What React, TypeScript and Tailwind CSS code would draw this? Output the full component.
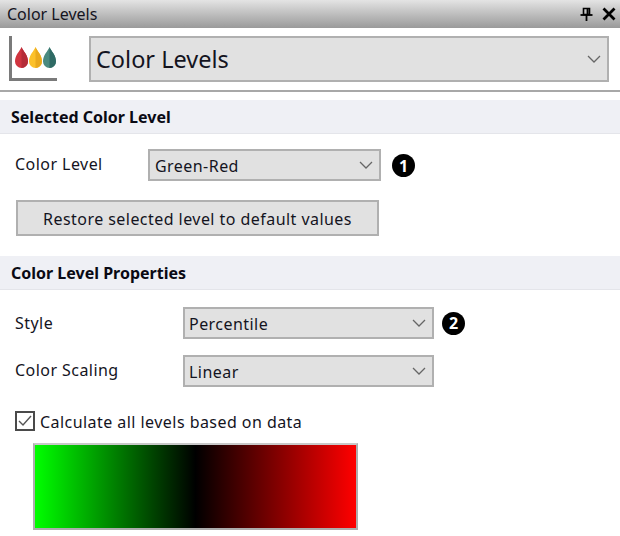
import React from "react";

const font = { fontFamily: '"Noto Sans", "Open Sans", sans-serif' };

const Chevron: React.FC<{ size?: number }> = ({ size = 14 }) => (
  <svg width={size} height={size * 0.6} viewBox="0 0 14 8.4" fill="none" stroke="#666" strokeWidth="1.3">
    <path d="M1 1l6 6 6-6" />
  </svg>
);

const Select: React.FC<{ value: string; className: string }> = ({ value, className }) => (
  <div className={`flex items-center justify-between border-2 border-[#b0b0b0] bg-[#e1e1e1] text-[#14141e] ${className}`}>
    <span className="pt-[2px]">{value}</span>
    <Chevron />
  </div>
);

const Badge: React.FC<{ n: number }> = ({ n }) => (
  <div className="flex h-[23px] w-[23px] items-center justify-center rounded-full bg-black text-[16px] font-bold leading-none tracking-normal text-white">{n}</div>
);

const SectionHeader: React.FC<{ title: string; className?: string }> = ({ title, className = "" }) => (
  <div className={`flex h-[34px] items-center border-b border-[#e4e5ea] bg-[#eff0f5] pl-[11px] text-[16px] font-bold text-[#0a0a14] ${className}`}>{title}</div>
);

const Drop: React.FC<{ light: string; dark: string }> = ({ light, dark }) => (
  <svg width="13" height="21" viewBox="0 0 13 21">
    <path d="M6.5 0C8 4 13 8 13 14.500a6.500 6.500 0 0 1-13 0C0 8 5 4 6.500 0z" fill={light} />
    <path d="M6.500 0C8 4 13 8 13 14.500a6.500 6.500 0 0 1-6.500 6.500z" fill={dark} />
  </svg>
);

export default function App() {
  return (
    <div className="h-[536px] w-[620px] overflow-hidden bg-white" style={font}>
      {/* title bar */}
      <div className="flex h-[28px] items-center justify-between bg-gradient-to-b from-[#e4e4e4] to-[#9a9a9a] pl-[7px] pr-[4px] text-[16px] text-[#14141e]">
        <span>Color Levels</span>
        <div className="flex items-center gap-[9px]">
          <svg width="13" height="15" viewBox="0 0 13 15" fill="none" stroke="#000">
            <path d="M3.5 1.5h6v6h-6z" strokeWidth="1.6" />
            <path d="M7.6 1.5v6" strokeWidth="2" />
            <path d="M0.5 8h12" strokeWidth="1.8" />
            <path d="M6.5 8v6" strokeWidth="1.8" />
          </svg>
          <svg width="14" height="14" viewBox="0 0 14 14" stroke="#000" strokeWidth="2.8">
            <path d="M1.5 1.5l11 11M12.5 1.5l-11 11" />
          </svg>
        </div>
      </div>

      {/* header row */}
      <div className="flex h-[64px] items-start border-b-2 border-[#a8a8a8] pt-[8px]">
        <div className="ml-[9px] flex h-[45px] w-[48px] items-end gap-[1px] border-b-[3px] border-l-[3px] border-[#7a7a7a] pb-[10px] pl-[3px]">
          <Drop light="#d0343f" dark="#b42c38" />
          <Drop light="#fcc12a" dark="#eaa91c" />
          <Drop light="#4a8a80" dark="#2f6a64" />
        </div>
        <Select value="Color Levels" className="ml-[32px] h-[46px] w-[520px] pl-[5px] pr-[6px] text-[23.5px]" />
      </div>

      <SectionHeader title="Selected Color Level" className="mt-[8px]" />

      <div className="mt-[15px] flex items-center pl-[15px] text-[16px] tracking-[0.45px] text-[#14141e]">
        <span className="w-[133px] pb-[3px]">Color Level</span>
        <Select value="Green-Red" className="h-[32px] w-[233px] pl-[5px] pr-[6px]" />
        <div className="ml-[11px] mt-[1px]"><Badge n={1} /></div>
      </div>

      <button className="ml-[16px] mt-[19px] block h-[36px] w-[363px] border-2 border-[#b0b0b0] bg-[#e1e1e1] pt-[1px] text-[16px] tracking-[0.45px] text-[#14141e]">
        Restore selected level to default values
      </button>

      <SectionHeader title="Color Level Properties" className="mt-[20px]" />

      <div className="mt-[17px] flex items-center pl-[15px] text-[16px] tracking-[0.45px] text-[#14141e]">
        <span className="w-[168px]">Style</span>
        <Select value="Percentile" className="h-[32px] w-[251px] pl-[4px] pr-[6px]" />
        <div className="ml-[8px]"><Badge n={2} /></div>
      </div>

      <div className="mt-[16px] flex items-center pl-[15px] text-[16px] tracking-[0.45px] text-[#14141e]">
        <span className="w-[168px] pb-[3px]">Color Scaling</span>
        <Select value="Linear" className="h-[32px] w-[251px] pl-[4px] pr-[6px]" />
      </div>

      <div className="mt-[24px] flex h-[20px] items-center pl-[15px] text-[16px] tracking-[0.45px] text-[#14141e]">
        <div className="flex h-[20px] w-[20px] items-center justify-center border-2 border-[#4a4a4a] bg-white">
          <svg width="14" height="12" viewBox="0 0 14 12" fill="none" stroke="#555" strokeWidth="1.4">
            <path d="M1 6l4 4 8-9" />
          </svg>
        </div>
        <span className="ml-[5px] pt-[2px]">Calculate all levels based on data</span>
      </div>

      <div className="ml-[33px] mt-[12px] h-[87px] w-[325px] border-2 border-[#adadad] border-t-[#c8c8c8] bg-[linear-gradient(to_right,#00ff00,#000000,#ff0000)]" />
    </div>
  );
}
